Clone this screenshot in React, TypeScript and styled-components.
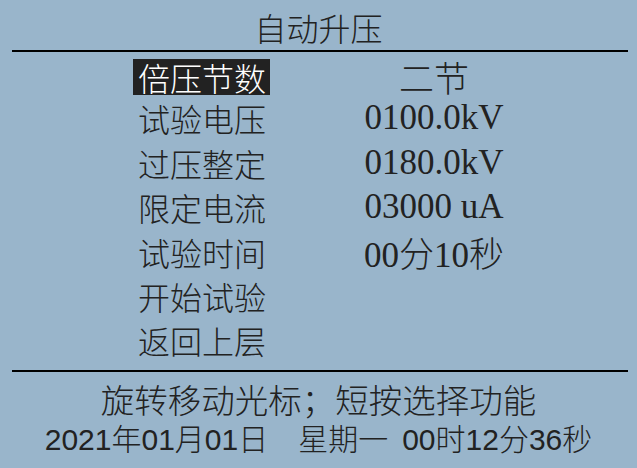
import * as React from 'react';
import styled, { createGlobalStyle } from 'styled-components';

const GlobalStyle = createGlobalStyle`
  html, body {
    margin: 0;
    padding: 0;
    background: #99b5cb;
  }
`;

const cjk = `"Noto Sans CJK SC", sans-serif`;
const serifNum = `"Liberation Serif", "Noto Sans CJK SC", serif`;
const sansNum = `"Liberation Sans", "Noto Sans CJK SC", sans-serif`;

type Row = { label: string; value?: string; active?: boolean };

const rows: Row[] = [
  { label: '倍压节数', value: '二节', active: true },
  { label: '试验电压', value: '0100.0kV' },
  { label: '过压整定', value: '0180.0kV' },
  { label: '限定电流', value: '03000 uA' },
  { label: '试验时间', value: '00分10秒' },
  { label: '开始试验' },
  { label: '返回上层' },
];

export default function App() {
  return (
    <Screen>
      <GlobalStyle />
      <Title>自动升压</Title>
      <Rule />
      <Menu>
        {rows.map((r) => (
          <React.Fragment key={r.label}>
            <Label $active={r.active}>{r.label}</Label>
            <Value>{r.value}</Value>
          </React.Fragment>
        ))}
      </Menu>
      <Rule />
      <Footer>
        <Hint>旋转移动光标；短按选择功能</Hint>
        <Clock>
          2021年01月01日<Gap $w={30} />星期一<Gap $w={14} />00时12分36秒
        </Clock>
      </Footer>
    </Screen>
  );
}

const Screen = styled.div`
  width: 637px;
  height: 468px;
  background: #99b5cb;
  color: #222;
  font-family: ${cjk};
  font-weight: 300;
  display: flex;
  flex-direction: column;
  overflow: hidden;
`;

const Title = styled.div`
  height: 50px;
  line-height: 55px;
  font-size: 32px;
  text-align: center;
`;

const Rule = styled.div`
  height: 2px;
  margin: 0 9px 0 12px;
  background: #000;
  flex-shrink: 0;
`;

const Menu = styled.div`
  display: grid;
  grid-template-columns: 137px 140px;
  grid-template-rows: 38.6px repeat(6, 44.4px);
  column-gap: 94px;
  padding: 5.7px 0 0 133px;
  align-items: center;
  height: 318px;
  box-sizing: border-box;
`;

const Label = styled.div<{ $active?: boolean }>`
  height: 36px;
  line-height: 36px;
  padding: 0 5px;
  font-size: 32px;
  white-space: nowrap;
  background: ${(p) => (p.$active ? '#222' : 'transparent')};
  color: ${(p) => (p.$active ? '#fff' : '#222')};
`;

const Value = styled.div`
  font-family: ${serifNum};
  font-weight: 300;
  font-size: 35px;
  text-align: center;
  white-space: nowrap;
`;

const Footer = styled.div`
  display: flex;
  flex-direction: column;
  align-items: center;
  padding-top: 6px;
`;

const Hint = styled.div`
  font-size: 33.5px;
  line-height: 42px;
`;

const Clock = styled.div`
  font-family: ${sansNum};
  font-size: 30px;
  line-height: 40px;
  white-space: nowrap;
  display: flex;
  align-items: center;
`;

const Gap = styled.span<{ $w: number }>`
  display: inline-block;
  width: ${(p) => p.$w}px;
`;
